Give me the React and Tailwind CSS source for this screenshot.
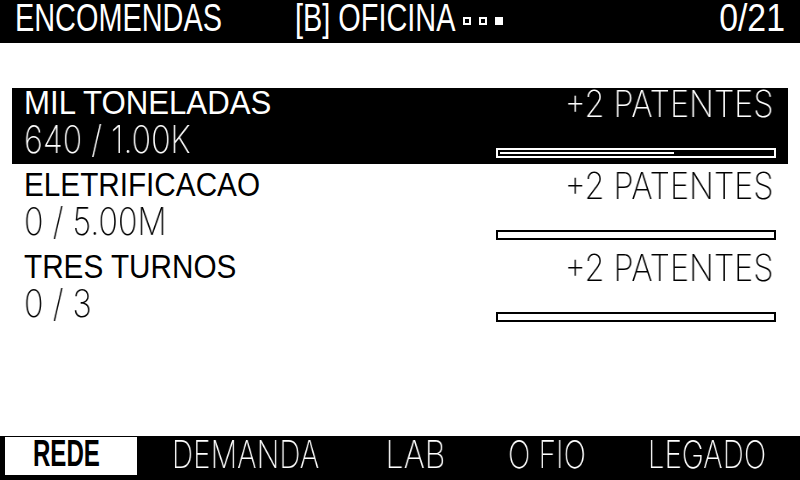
import React from "react";

const sans = { fontFamily: '"Liberation Sans", Arial, sans-serif' };
const thin = { fontFamily: 'Inter, "Noto Sans", sans-serif' };

const orders = [
  { title: "MIL TONELADAS", progress: "640 / 1.00K", pct: 64, active: true, sx: "scale-x-[0.945]" },
  { title: "ELETRIFICACAO", progress: "0 / 5.00M", pct: 0, sx: "scale-x-[0.9]" },
  { title: "TRES TURNOS", progress: "0 / 3", pct: 0, sx: "scale-x-[0.9]" },
];

// widths of the tab slots so the labels sit where the device draws them
const tabs = [
  { label: "REDE", w: "w-[132px]" },
  { label: "DEMANDA", w: "w-[216px]" },
  { label: "LAB", w: "w-[124px]" },
  { label: "O FIO", w: "w-[139px]" },
  { label: "LEGADO", w: "w-[182px]" },
];

function OrderRow({ order }) {
  const fg = order.active ? "text-white" : "text-black";
  const line = order.active ? "border-white" : "border-black";
  const fill = order.active ? "bg-white" : "bg-black";
  return (
    <div className={`h-[76px] px-[12px] flex justify-between ${order.active ? "bg-black" : "bg-white"} ${fg}`}>
      <div className="flex flex-col flex-1">
        <div className={`text-[33px] leading-[30px] whitespace-nowrap origin-left ${order.sx}`} style={sans}>
          {order.title}
        </div>
        <div
          className="mt-[2px] text-[38px] leading-none font-extralight whitespace-nowrap origin-left scale-x-[0.85] will-change-transform"
          style={thin}
        >
          {order.progress}
        </div>
      </div>
      <div className="flex flex-col items-end">
        <div
          className="text-[37px] leading-[32px] font-extralight mr-[3px] whitespace-nowrap origin-right scale-x-[0.875] will-change-transform"
          style={thin}
        >
          +2 PATENTES
        </div>
        <div className={`mt-auto mb-[6px] w-[280px] h-[10px] border-2 p-[2px] ${line}`}>
          <div className={`h-full ${fill}`} style={{ width: `${order.pct}%` }} />
        </div>
      </div>
    </div>
  );
}

export default function App() {
  return (
    <div className="w-[800px] h-[480px] bg-white flex flex-col overflow-hidden">
      {/* top bar */}
      <div className="h-[43px] bg-black text-white flex items-start pl-[15px] pr-[15px]">
        <div className="w-[280px] text-[38px] leading-[37px] whitespace-nowrap origin-left scale-x-[0.76]" style={sans}>
          ENCOMENDAS
        </div>
        <div className="text-[38px] leading-[37px] whitespace-nowrap origin-left scale-x-[0.76]" style={sans}>
          [B] OFICINA
        </div>
        <div className="flex gap-[8px] -ml-[43px] mt-[17px]">
          <div className="w-[8px] h-[8px] border-2 border-white" />
          <div className="w-[8px] h-[8px] border-2 border-white" />
          <div className="w-[8px] h-[8px] bg-white" />
        </div>
        <div className="ml-auto text-[38px] leading-[37px] whitespace-nowrap origin-right scale-x-[0.89]" style={sans}>
          0/21
        </div>
      </div>

      {/* orders */}
      <div className="mt-[45px] mx-[12px] flex flex-col gap-[6px]">
        {orders.map((o) => (
          <OrderRow key={o.title} order={o} />
        ))}
      </div>

      {/* bottom tabs */}
      <div className="mt-auto h-[44px] bg-black flex items-start pl-[5px]">
        {tabs.map((t, i) =>
          i === 0 ? (
            <div
              key={t.label}
              className={`${t.w} h-[38px] mt-[1px] bg-white text-black flex justify-center pr-[9px]`}
            >
              <span
                className="inline-block text-[37px] leading-[34px] font-bold scale-x-[0.65]"
                style={sans}
              >
                {t.label}
              </span>
            </div>
          ) : (
            <div key={t.label} className={`${t.w} flex justify-center text-white`}>
              <span
                className={`inline-block text-[38px] leading-[36px] font-extralight whitespace-nowrap will-change-transform ${
                  t.label === "LAB" ? "scale-x-[0.85]" : "scale-x-[0.78]"
                }`}
                style={thin}
              >
                {t.label}
              </span>
            </div>
          )
        )}
      </div>
    </div>
  );
}
